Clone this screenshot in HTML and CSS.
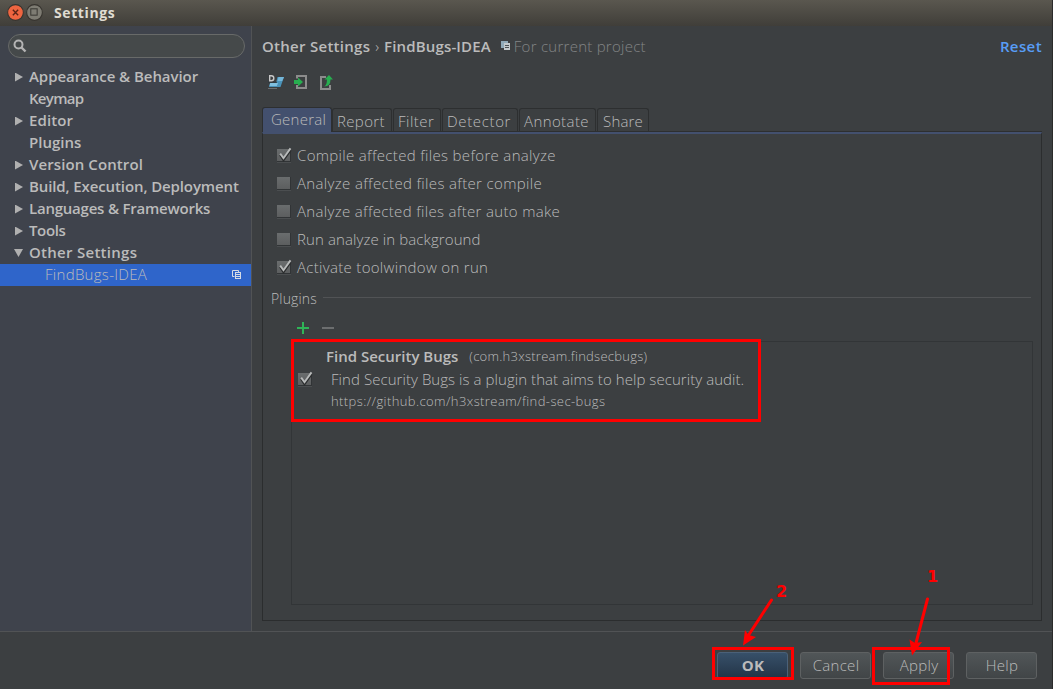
FILE: index.html
```html
<!DOCTYPE html>
<html lang="en">
<head>
<meta charset="utf-8">
<title>Settings</title>
<link rel="stylesheet" href="styles.css">
</head>
<body>
<svg class="defs" width="0" height="0" aria-hidden="true">
  <defs>
    <linearGradient id="boxfill" x1="0" y1="0" x2="0" y2="1"><stop offset="0" stop-color="#6a6d6e"/><stop offset="1" stop-color="#5c5e5f"/></linearGradient>
    <symbol id="box" viewBox="0 0 16 16"><rect x="1" y="2" width="14" height="13" fill="#313436"/><rect x="1" y="2" width="13" height="12" fill="url(#boxfill)"/><path d="M1 15.500h14" stroke="#4b4e50"/></symbol>
    <symbol id="tick" viewBox="0 0 16 16"><use href="#box"/><path d="M4.200 7.800l3.300 5L14.500 3" fill="none" stroke="#2b2d2e" stroke-width="2.400"/><path d="M4.200 6.600l3.300 4.600L14.500 1.400" fill="none" stroke="#b9bbbb" stroke-width="1.900"/></symbol>
    <symbol id="copy" viewBox="0 0 10 10"><path d="M2.500 6.500h-2v-6h6v2" fill="none" stroke="currentColor"/><rect x="3.500" y="2.500" width="5" height="6" fill="none" stroke="currentColor"/><path d="M4 4.500h4M4 6.500h4" stroke="currentColor"/></symbol>
    <symbol id="project" viewBox="0 0 10 10"><path d="M0 0h7v2H3v5H0z" fill="#8fa9b8"/><rect x="3" y="2" width="6" height="7" fill="#c3c9cc"/><path d="M4 4.500h4M4 6.500h4" stroke="#4b5154"/></symbol>
  </defs>
</svg>
<div class="window">
  <header class="titlebar">
    <svg class="wbtn" viewBox="0 0 16 16"><circle cx="8" cy="8" r="7.400" fill="#ef6540" stroke="#37342f"/><path d="M5.500 5.500l5 5M10.500 5.500l-5 5" stroke="#5b2416" stroke-width="1.300"/></svg>
    <svg class="wbtn" viewBox="0 0 16 16"><circle cx="8" cy="8" r="7.400" fill="#7e7c73" stroke="#37342f"/><rect x="4.500" y="4.500" width="6" height="6" fill="none" stroke="#3c3b36"/></svg>
    <span class="title">Settings</span>
  </header>
  <div class="middle">
    <aside class="sidebar">
      <div class="search"><svg viewBox="0 0 14 14"><circle cx="5.500" cy="5.500" r="4" fill="none" stroke="#b4b4b4" stroke-width="2"/><path d="M8.500 8.500l4 4" stroke="#b4b4b4" stroke-width="2.400"/></svg></div>
      <ul class="tree">
        <li><i class="right"></i><span class="t1">Appearance &amp; Behavior</span></li>
        <li><i></i><span class="t2">Keymap</span></li>
        <li><i class="right"></i><span class="t3">Editor</span></li>
        <li><i></i><span class="t4">Plugins</span></li>
        <li><i class="right"></i><span class="t5">Version Control</span></li>
        <li><i class="right"></i><span class="t6">Build, Execution, Deployment</span></li>
        <li><i class="right"></i><span class="t7">Languages &amp; Frameworks</span></li>
        <li><i class="right"></i><span class="t8">Tools</span></li>
        <li><i class="down"></i><span class="t9">Other Settings</span></li>
        <li class="selected"><span class="t10">FindBugs-IDEA</span><svg class="copy"><use href="#copy"/></svg></li>
      </ul>
    </aside>
    <main class="content">
      <div class="crumbs">
        <b class="c1">Other Settings</b><span class="sep">›</span><b class="c2">FindBugs-IDEA</b>
        <svg class="copy"><use href="#project"/></svg><span class="project">For current project</span>
        <b class="reset">Reset</b>
      </div>
      <div class="tools">
        <svg viewBox="0 0 16 16"><path d="M1 13l1-4h6l1.500-6H16l-3.500 10z" fill="#4a93ba"/><path d="M9.500 7l1-4H16l-1.800 4z" fill="#74b6d8"/><path d="M1.500 12l.7-3H10l-1.200 3z" fill="#80c0e0"/><path d="M0 14.500h9" stroke="#6b6f72"/><path d="M0 8.300h9" stroke="#2f3b42"/><path d="M1.700 1.700h1.600q2.500 0 2.500 2.500T3.300 6.700H1.700z" fill="#3c3f41" stroke="#c8c8c8" stroke-width="1.400"/></svg>
        <svg viewBox="0 0 16 16"><path d="M4 4.500V2h9v12H4v-3" fill="none" stroke="#8c8c8c" stroke-width="2"/><path d="M1 6h4V3.500L10 8l-5 4.500V10H1z" fill="#27ae4f"/></svg>
        <svg viewBox="0 0 16 16"><path d="M8 3H3v12h9v-4" fill="none" stroke="#8c8c8c" stroke-width="2"/><path d="M6 12.500q3-1 3-7H6.500L11 1l4 4.500h-2.500q0 7-6.500 7z" fill="#27ae4f"/></svg>
      </div>
      <nav class="tabs">
        <span class="tab active">General</span><span class="tab report">Report</span><span class="tab filter">Filter</span><span class="tab detector">Detector</span><span class="tab annotate">Annotate</span><span class="tab share">Share</span>
      </nav>
      <section class="panel">
        <div class="checks">
          <label><svg><use href="#tick"/></svg><span class="k1">Compile affected files before analyze</span></label>
          <label><svg><use href="#box"/></svg><span class="k2">Analyze affected files after compile</span></label>
          <label><svg><use href="#box"/></svg><span class="k3">Analyze affected files after auto make</span></label>
          <label><svg><use href="#box"/></svg><span class="k4">Run analyze in background</span></label>
          <label><svg><use href="#tick"/></svg><span class="k5">Activate toolwindow on run</span></label>
        </div>
        <div class="legend"><span>Plugins</span><hr></div>
        <div class="listtools"><svg viewBox="0 0 12 12"><path d="M6 0v12M0 6h12" stroke="#2fb457" stroke-width="2"/></svg><svg viewBox="0 0 12 12"><path d="M0 6h12" stroke="#6c6e6f" stroke-width="2"/></svg></div>
        <div class="list">
          <div class="plugin">
            <svg class="pcheck"><use href="#tick"/></svg>
            <div class="ptext">
              <div class="pname"><b>Find Security Bugs</b><small>(com.h3xstream.findsecbugs)</small></div>
              <div class="pdesc">Find Security Bugs is a plugin that aims to help security audit.</div>
              <div class="purl">https://github.com/h3xstream/find-sec-bugs</div>
            </div>
          </div>
        </div>
      </section>
    </main>
  </div>
  <footer class="footer">
    <button class="btn ok">OK</button><button class="btn cancel">Cancel</button><button class="btn apply">Apply</button><button class="btn help">Help</button>
  </footer>
  <svg class="marks" width="1053" height="689" viewBox="0 0 1053 689">
    <g fill="none" stroke="#f00" stroke-width="3">
      <rect x="292.500" y="340.500" width="467" height="80"/>
      <rect x="713.500" y="648.500" width="79" height="30"/>
      <rect x="873.500" y="648.500" width="75" height="35"/>
      <path d="M771.500 600L748 636M927.500 599l-12 46" stroke-linecap="round"/>
    </g>
    <path d="M743 645.500l2-15.500 3.500 5 7.500 2zM912 655.500l-2.500-16 5.500 3.500 7-1z" fill="#f00"/>
    <g class="num"><text x="776" y="597">2</text><text x="927" y="582">1</text></g>
  </svg>
</div>
</body>
</html>
```
FILE: styles.css
```css
* { box-sizing: border-box; }
body { margin: 0; background: #3c3f41; color: #bbb; font: 15px/22px "Open Sans", "Noto Sans", sans-serif; overflow: hidden; }
b { font-weight: 600; }
.defs { position: absolute; }
.window { position: relative; width: 1053px; height: 689px; display: flex; flex-direction: column; white-space: nowrap; border-right: 1px solid #2b2b2b; }
.titlebar { height: 26px; flex: none; display: flex; align-items: center; gap: 2px; padding: 0 0 1px 7px; background: linear-gradient(#5a574f, #403e39); }
.wbtn { width: 17px; height: 17px; }
.title { margin-left: 9px; color: #dfdbd2; font-weight: 700; font-size: 14px; letter-spacing: .6px; }
.middle { height: 605px; flex: none; display: flex; }
.sidebar { width: 252px; flex: none; background: #3f434c; border-right: 1px solid #515355; padding-top: 8px; }
.search { margin: 0 6px 0 8px; height: 24px; border: 1px solid #686a69; border-radius: 12px; background: #45494a; display: flex; align-items: center; padding-left: 4px; }
.search svg { width: 14px; height: 14px; }
.tree { list-style: none; margin: 8px 0 0; padding: 0; font-weight: 600; }
.tree li { height: 22px; display: flex; align-items: center; padding-left: 15px; }
.tree span { line-height: 20px; padding-bottom: 2px; }
.t1 { letter-spacing: -.05px; }
.t2 { letter-spacing: -.7px; }
.t3, .t5 { letter-spacing: .1px; }
.t6 { letter-spacing: -.11px; }
.t7 { letter-spacing: -.22px; }
.t8 { letter-spacing: -.35px; }
.t9, .c1 { letter-spacing: .28px; }
.t10 { letter-spacing: .3px; }
.c2 { letter-spacing: .15px; }
.tree i { width: 14px; flex: none; }
.tree i::before { content: ""; display: block; width: 8px; height: 9px; }
.tree .right::before { background: #b0b0b0; clip-path: polygon(0 0, 100% 50%, 0 100%); }
.tree .down::before { background: #b0b0b0; width: 9px; height: 8px; margin-left: -1px; clip-path: polygon(0 0, 100% 0, 50% 100%); }
.tree .selected { background: #2f65ca; font-weight: 300; padding: 0 9px 0 45px; justify-content: space-between; }
.copy { width: 10px; height: 10px; color: #d5dbe5; }
.content { flex: 1; padding: 9px 10px 10px; display: flex; flex-direction: column; }
.crumbs { height: 22px; display: flex; align-items: center; }
.sep { margin: 0 5px; font-weight: 300; }
.crumbs .copy { margin: 0 3px 0 10px; }
.project { color: #838586; font-weight: 300; letter-spacing: .26px; }
.reset { margin-left: auto; color: #589df6; letter-spacing: .4px; }
.tools { display: flex; gap: 9px; padding: 17px 0 0 6px; height: 50px; }
.tools svg { width: 16px; height: 16px; }
.tabs { display: flex; align-items: flex-end; height: 25px; gap: 1px; font-weight: 300; border-bottom: 1px solid #2d2f30; }
.tab { height: 23px; border: 1px solid #2d2f30; border-bottom: 0; border-radius: 3px 3px 0 0; display: flex; align-items: center; padding: 2px 0 0 4px; }
.active { width: 70px; height: 25px; background: #43506e; margin: 0 -1px -1px 0; padding: 0 0 2px 8px; letter-spacing: .25px; }
.report { width: 60px; letter-spacing: .35px; }
.filter { width: 48px; letter-spacing: .5px; }
.detector { width: 76px; letter-spacing: .65px; }
.annotate { width: 77px; letter-spacing: .4px; }
.share { width: 52px; padding-left: 5px; letter-spacing: .2px; }
.panel { width: 780px; height: 489px; border: 1px solid #2b2d2e; border-top: 2px solid #43506e; padding: 8px 8px 15px; font-weight: 300; display: flex; flex-direction: column; }
.checks label { display: flex; align-items: center; height: 28px; padding-left: 5px; gap: 5px; }
.checks svg, .pcheck { width: 16px; height: 16px; flex: none; }
.checks label svg { margin-top: -2px; }
.checks span { line-height: 20px; padding-bottom: 2px; }
.k1, .k3 { letter-spacing: .33px; }
.k2 { letter-spacing: .35px; }
.k4 { letter-spacing: .1px; }
.k5 { letter-spacing: .31px; }
.legend { display: flex; align-items: center; height: 22px; margin-top: 6px; font-size: 14px; letter-spacing: .15px; }
.legend hr { flex: 1; margin: 0 2px 3px 6px; border: 0; border-top: 1px solid #515355; }
.listtools { display: flex; align-items: center; gap: 13px; height: 31px; padding: 5px 0 0 26px; }
.listtools svg { width: 12px; height: 12px; }
.list { flex: 1; width: 742px; margin-left: 20px; border: 1px solid #323537; }
.plugin { display: flex; align-items: center; height: 74px; padding-left: 5px; }
.ptext { padding: 0 0 2px 13px; }
.pname { display: flex; gap: 11px; height: 23px; }
.pname small { font-size: 13px; letter-spacing: .26px; }
.pdesc { padding-left: 5px; height: 22px; letter-spacing: .06px; }
.purl { padding-left: 5px; font-size: 13px; letter-spacing: .41px; }
.footer { flex: 1; display: flex; gap: 12px; justify-content: flex-end; padding: 20px 15px 0 0; border-top: 1px solid #515355; }
.btn { width: 71px; height: 27px; padding: 0 0 2px 1px; border: 1px solid #5e6162; border-radius: 3px; background: linear-gradient(#515658, #414547); color: #bbb; font: inherit; font-weight: 300; letter-spacing: .3px; }
.ok { background: linear-gradient(#375069, #233447); font-weight: 700; border-color: #4b6178; }
.marks { position: absolute; left: 0; top: 0; }
.num { fill: #f00; font: bold 16px "DejaVu Sans", sans-serif; }
```
